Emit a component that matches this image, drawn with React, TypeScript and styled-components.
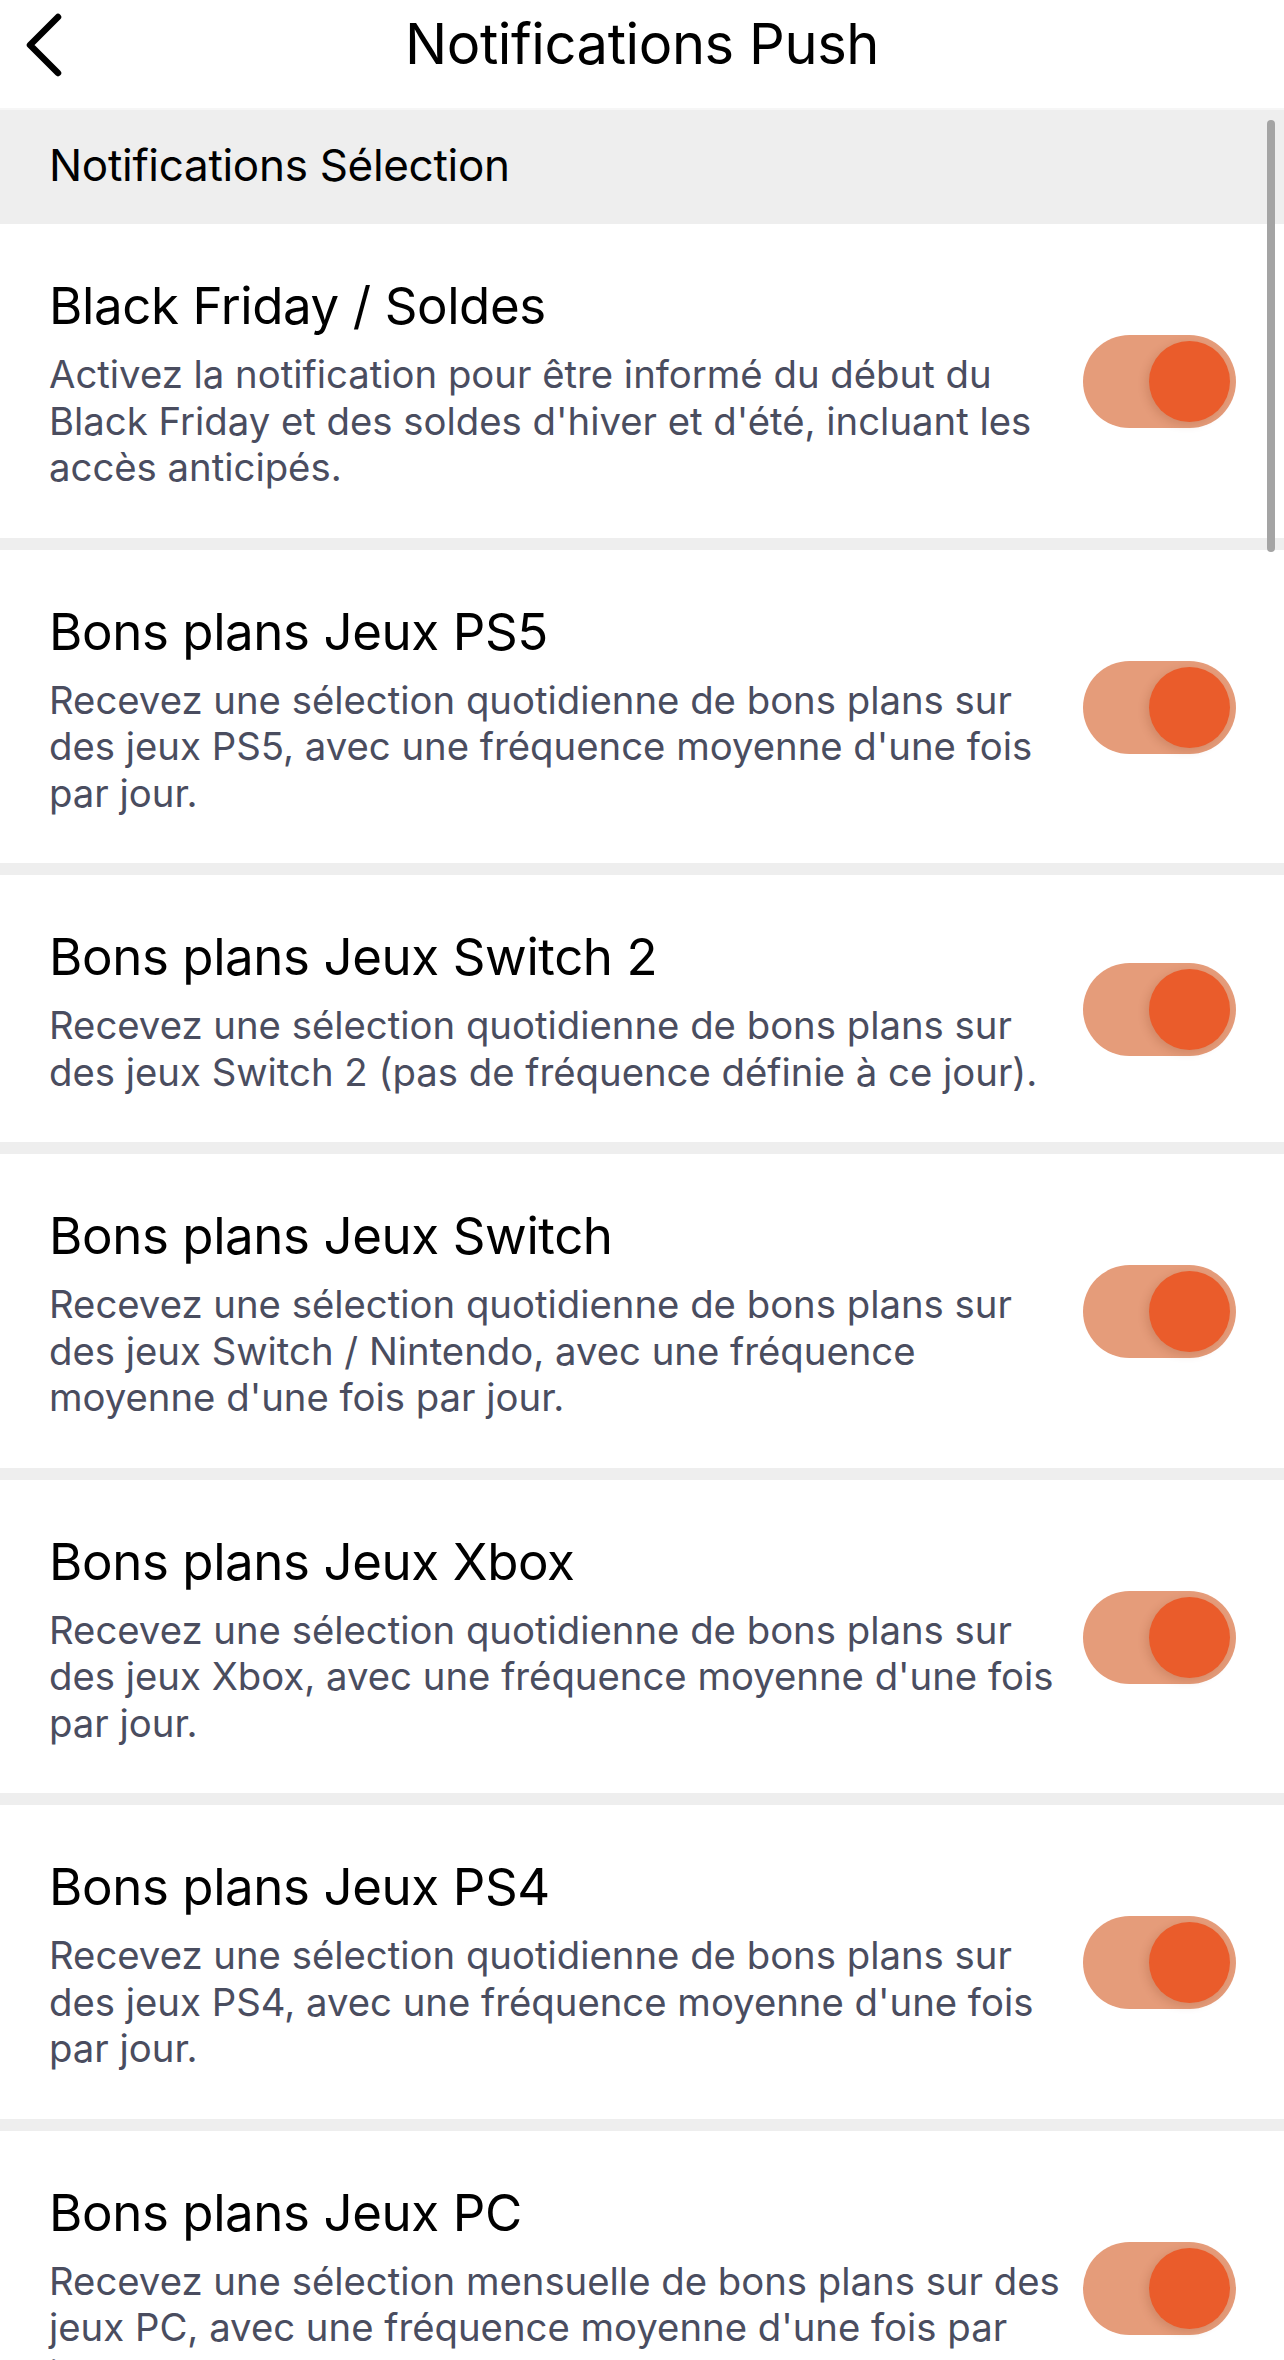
import React, { useState } from "react";
import styled, { createGlobalStyle } from "styled-components";

const notifications = [
  {
    id: "soldes",
    title: "Black Friday / Soldes",
    text: "Activez la notification pour être informé du début du Black Friday et des soldes d'hiver et d'été, incluant les accès anticipés.",
  },
  {
    id: "ps5",
    title: "Bons plans Jeux PS5",
    text: "Recevez une sélection quotidienne de bons plans sur des jeux PS5, avec une fréquence moyenne d'une fois par jour.",
  },
  {
    id: "switch2",
    title: "Bons plans Jeux Switch 2",
    text: "Recevez une sélection quotidienne de bons plans sur des jeux Switch 2 (pas de fréquence définie à ce jour).",
  },
  {
    id: "switch",
    title: "Bons plans Jeux Switch",
    text: "Recevez une sélection quotidienne de bons plans sur des jeux Switch / Nintendo, avec une fréquence moyenne d'une fois par jour.",
  },
  {
    id: "xbox",
    title: "Bons plans Jeux Xbox",
    text: "Recevez une sélection quotidienne de bons plans sur des jeux Xbox, avec une fréquence moyenne d'une fois par jour.",
  },
  {
    id: "ps4",
    title: "Bons plans Jeux PS4",
    text: "Recevez une sélection quotidienne de bons plans sur des jeux PS4, avec une fréquence moyenne d'une fois par jour.",
  },
  {
    id: "pc",
    title: "Bons plans Jeux PC",
    text: "Recevez une sélection mensuelle de bons plans sur des jeux PC, avec une fréquence moyenne d'une fois par jour.",
  },
];

function App() {
  const [enabled, setEnabled] = useState<Record<string, boolean>>(
    Object.fromEntries(notifications.map((n) => [n.id, true]))
  );

  const toggle = (id: string) => {
    setEnabled((prev) => ({ ...prev, [id]: !prev[id] }));
  };

  return (
    <Page>
      <GlobalStyle />
      <Header>
        <BackButton aria-label="Retour">
          <svg width="40" height="64" viewBox="0 0 40 64" fill="none">
            <path
              d="M33 4 L5 32 L33 60"
              stroke="#000"
              strokeWidth="6.5"
              strokeLinecap="round"
              strokeLinejoin="round"
            />
          </svg>
        </BackButton>
        <Title>Notifications Push</Title>
        <span />
      </Header>
      <SectionHeader>Notifications Sélection</SectionHeader>
      <List>
        {notifications.map((n) => (
          <Row key={n.id}>
            <TextBlock>
              <RowTitle>{n.title}</RowTitle>
              <RowText>{n.text}</RowText>
            </TextBlock>
            <Switch $on={enabled[n.id]} onClick={() => toggle(n.id)} aria-label={n.title}>
              <Thumb $on={enabled[n.id]} />
            </Switch>
          </Row>
        ))}
      </List>
      <ScrollIndicator />
    </Page>
  );
}

export default App;

const GlobalStyle = createGlobalStyle`
  body {
    margin: 0;
    background: #fff;
    font-family: Inter, "Noto Sans", "Liberation Sans", sans-serif;
    -webkit-font-smoothing: antialiased;
  }
`;

const Page = styled.div`
  position: relative;
  width: 1284px;
  height: 2360px;
  overflow: hidden;
  background: #fff;
`;

const Header = styled.header`
  display: grid;
  grid-template-columns: 1fr auto 1fr;
  align-items: center;
  height: 110px;
  padding: 0 25px;
  border-bottom: 2px solid #f6f6f6;
  box-sizing: border-box;
`;

const BackButton = styled.button`
  display: flex;
  align-items: center;
  justify-self: start;
  padding: 0;
  margin: -18px 0 0 0;
  border: none;
  background: none;
  cursor: pointer;
`;

const Title = styled.h1`
  margin: 0 0 20px;
  font-size: 56px;
  font-weight: 400;
  color: #000;
  letter-spacing: -0.4px;
`;

const SectionHeader = styled.div`
  display: flex;
  align-items: center;
  height: 114px;
  padding: 0 49px 4px;
  box-sizing: border-box;
  background: #eeeeee;
  font-size: 44px;
  color: #000;
  letter-spacing: -0.3px;
`;

const List = styled.div`
  display: flex;
  flex-direction: column;
  gap: 12px;
  background: #eeeeee;
`;

const Row = styled.div`
  display: flex;
  align-items: center;
  gap: 14px;
  padding: 49px 48px 47px 49px;
  background: #fff;
`;

const TextBlock = styled.div`
  flex: 1;
  min-width: 0;
`;

const RowTitle = styled.div`
  margin-bottom: 13px;
  font-size: 51px;
  line-height: 65px;
  color: #000;
  letter-spacing: -0.4px;
`;

const RowText = styled.p`
  margin: 0;
  font-size: 38.3px;
  line-height: 46.5px;
  color: #4a4d5f;
`;

const Switch = styled.button<{ $on: boolean }>`
  display: flex;
  align-items: center;
  justify-content: ${(p) => (p.$on ? "flex-end" : "flex-start")};
  flex-shrink: 0;
  width: 153px;
  height: 93px;
  padding: 6px;
  box-sizing: border-box;
  border: none;
  border-radius: 47px;
  background: ${(p) => (p.$on ? "#e59c7a" : "#e5e5ea")};
  cursor: pointer;
`;

const Thumb = styled.span<{ $on: boolean }>`
  display: block;
  width: 81px;
  height: 81px;
  border-radius: 50%;
  background: ${(p) => (p.$on ? "#ea5c2b" : "#fff")};
  box-shadow: -3px 3px 8px rgba(120, 50, 20, 0.18);
`;

const ScrollIndicator = styled.div`
  position: absolute;
  top: 120px;
  right: 9px;
  width: 8px;
  height: 432px;
  border-radius: 4px;
  background: #a4a4a4;
`;
